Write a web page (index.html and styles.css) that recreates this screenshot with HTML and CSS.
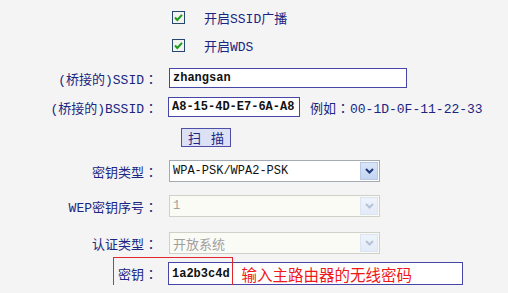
FILE: index.html
```html
<!DOCTYPE html>
<html lang="zh-CN">
<head>
    <meta charset="UTF-8">
    <title>WDS设置</title>
    <link rel="stylesheet" href="styles.css">
</head>
<body>
    <div class="form">
        <div class="row check-row first">
            <span class="label"></span>
            <div class="field">
                <svg class="checkbox" width="13" height="13" viewBox="0 0 13 13">
                    <rect x="0.5" y="0.5" width="12" height="12" fill="#f2f2ee" stroke="#27486e"/>
                    <path d="M3 6.5 L5.3 9 L10 3.8" fill="none" stroke="#1f9a1f" stroke-width="2"/>
                </svg>
                <span class="check-text">开启SSID广播</span>
            </div>
        </div>
        <div class="row check-row second">
            <span class="label"></span>
            <div class="field">
                <svg class="checkbox" width="13" height="13" viewBox="0 0 13 13">
                    <rect x="0.5" y="0.5" width="12" height="12" fill="#f2f2ee" stroke="#27486e"/>
                    <path d="M3 6.5 L5.3 9 L10 3.8" fill="none" stroke="#1f9a1f" stroke-width="2"/>
                </svg>
                <span class="check-text">开启WDS</span>
            </div>
        </div>
        <div class="row input-row ssid">
            <span class="label">(桥接的)SSID<span class="colon">：</span></span>
            <div class="field">
                <div class="input ssid-input">zhangsan</div>
            </div>
        </div>
        <div class="row input-row bssid">
            <span class="label">(桥接的)BSSID<span class="colon">：</span></span>
            <div class="field">
                <div class="input bssid-input">A8-15-4D-E7-6A-A8</div>
                <span class="example">例如<span class="colon">：</span>00-1D-0F-11-22-33</span>
            </div>
        </div>
        <div class="row button-row">
            <span class="label"></span>
            <div class="field">
                <button class="scan">扫 描</button>
            </div>
        </div>
        <div class="row select-row key-type">
            <span class="label">密钥类型<span class="colon">：</span></span>
            <div class="field">
                <div class="select">
                    <span class="select-text">WPA-PSK/WPA2-PSK</span>
                    <span class="arrow">
                        <svg width="9" height="6" viewBox="0 0 9 6"><path d="M1 1 L4.5 4.5 L8 1" fill="none" stroke="#1d3a78" stroke-width="2"/></svg>
                    </span>
                </div>
            </div>
        </div>
        <div class="row select-row wep">
            <span class="label">WEP密钥序号<span class="colon">：</span></span>
            <div class="field">
                <div class="select disabled">
                    <span class="select-text">1</span>
                    <span class="arrow">
                        <svg width="9" height="6" viewBox="0 0 9 6"><path d="M1 1 L4.5 4.5 L8 1" fill="none" stroke="#b6c3d6" stroke-width="2"/></svg>
                    </span>
                </div>
            </div>
        </div>
        <div class="row select-row auth">
            <span class="label">认证类型<span class="colon">：</span></span>
            <div class="field">
                <div class="select disabled">
                    <span class="select-text cjk">开放系统</span>
                    <span class="arrow">
                        <svg width="9" height="6" viewBox="0 0 9 6"><path d="M1 1 L4.5 4.5 L8 1" fill="none" stroke="#b6c3d6" stroke-width="2"/></svg>
                    </span>
                </div>
            </div>
        </div>
        <div class="row key-row">
            <span class="label">密钥<span class="colon">：</span></span>
            <div class="field">
                <div class="input key-input">
                    <span class="key-value">1a2b3c4d</span>
                    <span class="hint">输入主路由器的无线密码</span>
                </div>
            </div>
            <div class="mark"></div>
        </div>
    </div>
</body>
</html>
```

FILE: styles.css
```css
body {
    margin: 0;
    background-color: #f4f4f4;
    font-family: "Liberation Mono", "Noto Sans CJK SC", monospace;
    font-size: 13px;
    color: #1a2682;
}

.row {
    display: flex;
    align-items: center;
}

.label {
    width: 158px;
    flex: none;
    text-align: right;
    white-space: nowrap;
}

.colon {
    display: inline-block;
    width: 14px;
    text-align: center;
    font-family: "Noto Sans CJK JP", sans-serif;
}

.field {
    margin-left: 10px;
    display: flex;
    align-items: center;
}

/* rows */
.check-row { height: 13px; }
.check-row.first { margin-top: 11px; }
.check-row.second { margin-top: 15px; }
.input-row { height: 20px; }
.ssid { margin-top: 16px; }
.bssid { margin-top: 9px; }
.button-row { height: 19px; margin-top: 11px; }
.select-row { height: 22px; }
.key-type { margin-top: 13px; }
.wep { margin-top: 13px; }
.auth { margin-top: 15px; }
.key-row { height: 23px; margin-top: 8px; position: relative; }

.checkbox {
    margin-left: 4px;
    display: block;
}

.check-text {
    margin-left: 19px;
}

.input {
    box-sizing: border-box;
    background-color: #fff;
    border: 1px solid #4646a8;
    color: #111;
    font-weight: bold;
    font-size: 12px;
    display: flex;
    align-items: center;
    padding-left: 3px;
}

.ssid-input { width: 238px; height: 20px; margin-left: 1px; }
.bssid-input { width: 132px; height: 20px; }
.key-input { width: 295px; height: 23px; }

.example {
    margin-left: 10px;
    white-space: nowrap;
}

.scan {
    margin-left: 13px;
    width: 50px;
    height: 19px;
    padding: 0;
    background-color: #dde1f6;
    border: 1px solid #4e4ea6;
    color: #1a2682;
    font-family: "Noto Sans CJK SC", sans-serif;
    font-size: 13px;
    line-height: 17px;
    word-spacing: 7px;
}

.select {
    box-sizing: border-box;
    width: 211px;
    height: 22px;
    margin-left: 1px;
    background-color: #fff;
    border: 1px solid #a4aab2;
    display: flex;
    align-items: center;
    justify-content: space-between;
    padding: 1px;
}

.select-text {
    padding-left: 2px;
    color: #111;
    font-size: 12px;
}

.select-text.cjk {
    font-size: 13px;
}

.arrow {
    width: 18px;
    height: 18px;
    box-sizing: border-box;
    border: 1px solid #b5c8e6;
    background: linear-gradient(#d9e5f8, #c3d5f1);
    display: flex;
    align-items: center;
    justify-content: center;
}

.select.disabled {
    background-color: #fbfbf6;
    border-color: #cfd1c8;
}

.select.disabled .select-text {
    color: #a0a0a0;
}

.select.disabled .arrow {
    background: linear-gradient(#eef3fb, #e3ebf8);
    border-color: #dbe4f2;
}

.key-value {
    color: #111;
}

.hint {
    margin-left: 12px;
    color: #f01818;
    font-family: "Noto Sans CJK SC", sans-serif;
    font-weight: normal;
    font-size: 15.5px;
    white-space: nowrap;
}

.mark {
    position: absolute;
    left: 113px;
    top: -5px;
    width: 120px;
    height: 30px;
    box-sizing: border-box;
    border: 1px solid #e3262b;
}
```
